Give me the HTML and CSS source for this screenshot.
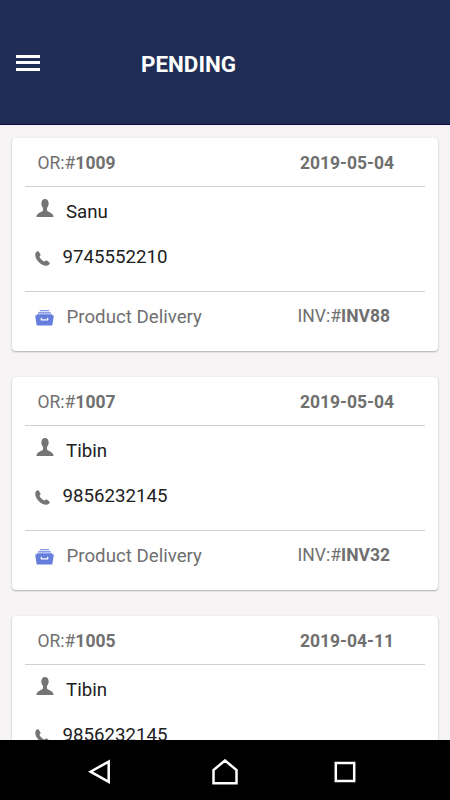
FILE: index.html
```html
<!DOCTYPE html>
<html lang="en">
<head>
    <meta charset="utf-8">
    <title>Pending</title>
    <link rel="stylesheet" href="styles.css">
</head>
<body>

    <!-- shared icons -->
    <svg class="defs" width="0" height="0">
        <symbol id="person" viewBox="0 0 18 18">
            <path d="M9 0C6.600 0 5.400 1.700 5.500 4.100C5.100 4.400 5.200 6 5.800 6.400C6 7.500 6.400 8.200 7 8.800V11.500C6.500 13.200 .7 13.400 .4 18H17.600C17.300 13.400 11.500 13.200 11 11.500V8.800C11.600 8.200 12 7.500 12.200 6.400C12.800 6 12.900 4.400 12.500 4.100C12.600 1.700 11.400 0 9 0Z"/>
        </symbol>
        <symbol id="phone" viewBox="0 0 15 15">
            <path d="M1.200 1.100C2 .2 3.200 .1 3.800 .8L5.400 3.300C5.800 4 5.500 4.700 4.600 5.400C4.300 5.900 5.200 7.300 6.400 8.500C7.600 9.700 9 10.700 9.500 10.400C10.300 9.500 11 9.200 11.800 9.600L14.200 11.200C14.900 11.800 14.800 12.900 13.900 13.800C11.300 15.900 7.100 14.400 3.900 11.200C.7 7.900-.9 3.700 1.200 1.100Z"/>
        </symbol>
        <symbol id="box" viewBox="0 0 19 16">
            <path d="M4.800 .2h9.400v1H4.800zM3.200 2.200h12.600v1.200H3.200zM1.800 4.200h15.400l.3 1.400H18.500q.4 0 .3.500L17.400 14.800q-.1.700-.8.700H2.400q-.7 0-.8-.7L.2 6.100Q.1 5.600.5 5.600H1.500zM5.700 7.700v2.200q0 .6.600.6h6.400q.6 0 .6-.6V7.700h-1.200v1.600H6.900V7.700z"/>
        </symbol>
    </svg>

    <header class="toolbar">
        <div class="menu"><span></span><span></span><span></span></div>
        <h1>PENDING</h1>
    </header>

    <main class="orders">
        <div class="card">
            <div class="card-head">
                <span>OR:#<b>1009</b></span>
                <span class="date">2019-05-04</span>
            </div>
            <div class="card-body">
                <div class="name"><svg class="icon-person"><use href="#person"/></svg><span>Sanu</span></div>
                <div class="phone"><svg class="icon-phone"><use href="#phone"/></svg><span>9745552210</span></div>
            </div>
            <div class="card-foot">
                <div class="type"><svg class="icon-box"><use href="#box"/></svg><span>Product Delivery</span></div>
                <span class="invoice">INV:#<b>INV88</b></span>
            </div>
        </div>

        <div class="card">
            <div class="card-head">
                <span>OR:#<b>1007</b></span>
                <span class="date">2019-05-04</span>
            </div>
            <div class="card-body">
                <div class="name"><svg class="icon-person"><use href="#person"/></svg><span>Tibin</span></div>
                <div class="phone"><svg class="icon-phone"><use href="#phone"/></svg><span>9856232145</span></div>
            </div>
            <div class="card-foot">
                <div class="type"><svg class="icon-box"><use href="#box"/></svg><span>Product Delivery</span></div>
                <span class="invoice">INV:#<b>INV32</b></span>
            </div>
        </div>

        <div class="card">
            <div class="card-head">
                <span>OR:#<b>1005</b></span>
                <span class="date">2019-04-11</span>
            </div>
            <div class="card-body">
                <div class="name"><svg class="icon-person"><use href="#person"/></svg><span>Tibin</span></div>
                <div class="phone"><svg class="icon-phone"><use href="#phone"/></svg><span>9856232145</span></div>
            </div>
        </div>
    </main>

    <!-- android buttons -->
    <nav class="navbar">
        <svg width="24" height="26" viewBox="0 0 24 26"><path d="M20.700 2.600V22.800L2.500 12.700Z"/></svg>
        <svg width="26" height="26" viewBox="0 0 26 26"><path d="M1.500 24.200V11L13 1.500L24.500 11V24.200Z"/></svg>
        <svg width="22" height="22" viewBox="0 0 22 22"><path d="M1.800 2h18.400v18H1.800z"/></svg>
    </nav>

</body>
</html>
```
FILE: styles.css
```css
* { box-sizing: border-box; }
body {
    margin: 0;
    height: 800px;
    display: flex;
    flex-direction: column;
    overflow: hidden;
    background: #f6f4f5;
    color: #212121;
    font-family: Roboto, "Liberation Sans", sans-serif;
}
.defs { position: absolute; }

/* top bar */
.toolbar {
    height: 125px;
    flex: none;
    display: flex;
    align-items: center;
    padding: 0 16px;
    background: #202e56;
    border-bottom: 1px solid #070b3b;
}
.menu { width: 24px; display: grid; gap: 3.5px; margin-top: 1px; }
.menu span { height: 3px; background: #fff; }
h1 { margin: 4px 0 0 101px; color: #fff; font-size: 22.4px; line-height: 28px; font-weight: 700; }

/* order cards */
.orders {
    flex: 1;
    min-height: 0;
    overflow: hidden;
    padding: 13px 12px 0;
}
.card {
    height: 213px;
    margin-bottom: 26px;
    padding: 0 13px;
    background: #fff;
    border-radius: 4px;
    box-shadow: 0 1px 2px rgba(0, 0, 0, .28), 0 0 1px rgba(0, 0, 0, .12);
}
.card-head {
    height: 49px;
    display: flex;
    justify-content: space-between;
    padding: 14px 31px 0 12.5px;
    border-bottom: 1px solid #d0cfcf;
    color: #707070;
    font-size: 17.5px;
    line-height: 22px;
}
.card b, .date { font-weight: 700; }
.card-body { height: 105px; border-bottom: 1px solid #d0cfcf; padding-top: 12px; }
.name, .phone, .type { display: flex; font-size: 18.7px; line-height: 26px; }
.name { padding-left: 10.5px; }
.phone { padding-left: 10px; margin-top: 19px; }
.card svg { flex: none; }
.icon-person { width: 18px; height: 18px; margin-right: 12.5px; fill: #757575; }
.icon-phone { width: 15px; height: 15px; margin: 7px 12.5px 0 0; fill: #757575; }
.icon-box { width: 19px; height: 16px; margin: 6px 12.5px 0 0; fill: #667edb; }
.card-foot {
    display: flex;
    justify-content: space-between;
    padding: 12px 35px 0 10px;
    color: #707070;
}
.invoice { font-size: 17.5px; line-height: 26px; margin-top: -1px; }

/* system bar */
.navbar {
    height: 60px;
    flex: none;
    display: flex;
    align-items: center;
    justify-content: space-between;
    padding: 3px 94px 0 88px;
    background: #000;
}
.navbar path { fill: none; stroke: #fff; stroke-width: 2.5; }
.navbar svg:nth-child(2) { margin-left: 3px; }
```
